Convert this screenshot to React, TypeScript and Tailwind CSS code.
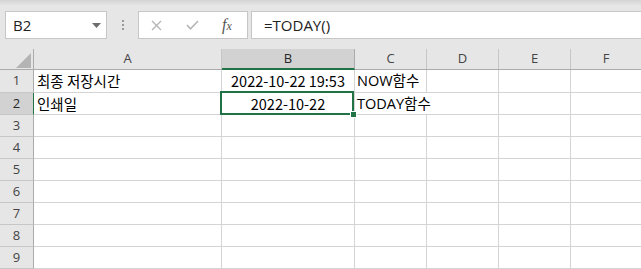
import React from 'react';

const cols = [
  { key: 'A', w: 'w-[188px]' },
  { key: 'B', w: 'w-[133px]' },
  { key: 'C', w: 'w-[72px]' },
  { key: 'D', w: 'w-[72px]' },
  { key: 'E', w: 'w-[72px]' },
  { key: 'F', w: 'flex-1' },
];

const rows = [1, 2, 3, 4, 5, 6, 7, 8, 9];

const cellFont = { fontFamily: '"Noto Sans CJK KR", "Noto Sans", sans-serif' };
const mixedFont = { fontFamily: '"Open Sans", "Noto Sans CJK KR", sans-serif' };

function CellContent({ col, row }: { col: string; row: number }) {
  if (row === 1 && col === 'A') return <span className="pl-[3px]">최종 저장시간</span>;
  if (row === 1 && col === 'B') return <span className="w-full text-center">2022-10-22 19:53</span>;
  if (row === 1 && col === 'C') return <span className="pl-[2px] whitespace-nowrap" style={mixedFont}>NOW함수</span>;
  if (row === 2 && col === 'A') return <span className="pl-[3px]">인쇄일</span>;
  if (row === 2 && col === 'B') return <span className="w-full text-center">2022-10-22</span>;
  if (row === 2 && col === 'C') return <span className="pl-[2px] whitespace-nowrap" style={mixedFont}>TODAY함수</span>;
  return null;
}

export default function App() {
  return (
    <div className="w-[641px] h-[269px] overflow-hidden bg-white select-none" style={{ fontFamily: '"Open Sans", "Noto Sans", sans-serif' }}>
      {/* Formula bar area */}
      <div className="h-[49px] bg-gradient-to-b from-[#d4d4d4] via-[#e6e6e6] via-[12%] to-[#e6e6e6] flex items-start pt-[11px] pl-[5px]">
        {/* Name box */}
        <div className="w-[102px] h-[28px] bg-white border border-[#c6c6c6] flex items-center justify-between pl-[7px] pr-[5px]">
          <span className="text-[15px] text-[#222]">B2</span>
          <svg width="9" height="5" viewBox="0 0 9 5"><path d="M0 0H9L4.5 5Z" fill="#6d6d6d" /></svg>
        </div>
        {/* Separator dots */}
        <div className="w-[31px] h-[28px] flex flex-col items-center justify-center gap-[2px]">
          <div className="w-[2px] h-[2px] bg-[#9a9a9a]" />
          <div className="w-[2px] h-[2px] bg-[#9a9a9a]" />
          <div className="w-[2px] h-[2px] bg-[#9a9a9a]" />
        </div>
        {/* Buttons */}
        <div className="w-[110px] h-[28px] bg-white border border-[#c6c6c6] flex items-center">
          <svg className="ml-[12px]" width="11" height="11" viewBox="0 0 11 11"><path d="M1 1L10 10M10 1L1 10" stroke="#b4b4b4" strokeWidth="1.3" /></svg>
          <svg className="ml-[24px]" width="13" height="10" viewBox="0 0 13 10"><path d="M1 5L4.5 8.8L12 1" stroke="#b4b4b4" strokeWidth="1.5" fill="none" /></svg>
          <span className="ml-[23px] text-[16px] leading-none italic text-[#555]" style={{ fontFamily: '"Liberation Serif", serif' }}>f<span className="text-[12px]">x</span></span>
        </div>
        {/* Formula input */}
        <div className="ml-[3px] flex-1 h-[28px] bg-white border border-[#c6c6c6] border-r-0 flex items-center pl-[12px]">
          <span className="text-[15px] text-[#222]">=TODAY()</span>
        </div>
      </div>

      {/* Column headers */}
      <div className="flex h-[21px] bg-[#e6e6e6] border-b border-[#ababab] text-[13px] text-[#444]">
        <div className="w-[34px] border-r border-[#ababab] relative">
          <svg className="absolute left-[16px] top-[4px]" width="15" height="15" viewBox="0 0 15 15"><path d="M15 0V15H0Z" fill="#b4b4b4" /></svg>
        </div>
        {cols.map((c) =>
          c.key === 'B' ? (
            <div key={c.key} className={`${c.w} bg-[#d2d2d2] border-r border-[#ababab] border-b-2 border-b-[#217346] -mb-[1px] flex items-center justify-center text-[#262626]`}>
              {c.key}
            </div>
          ) : (
            <div key={c.key} className={`${c.w} ${c.key === 'F' ? '' : 'border-r border-[#c6c6c6]'} flex items-center justify-center`}>
              {c.key}
            </div>
          )
        )}
      </div>

      {/* Rows */}
      {rows.map((r) => (
        <div key={r} className={`flex ${r === 1 ? 'h-[23px]' : 'h-[22px]'} border-b border-[#d4d4d4]`}>
          <div
            className={`w-[34px] border-r ${r === 2 ? 'bg-[#d2d2d2] border-[#217346] text-[#262626]' : 'bg-[#e6e6e6] border-[#ababab] text-[#444]'} flex items-center justify-center text-[13px] -mb-[1px] border-b border-b-[#c6c6c6]`}
          >
            {r}
          </div>
          {cols.map((c) => {
            const hideRight = r === 2 && c.key === 'C';
            const selected = r === 2 && c.key === 'B';
            return (
              <div
                key={c.key}
                className={`${c.w} ${c.key === 'F' || hideRight ? '' : 'border-r border-[#d4d4d4]'} ${hideRight ? 'pr-[1px]' : ''} relative flex items-center text-[14.5px] text-black overflow-visible`}
                style={cellFont}
              >
                <CellContent col={c.key} row={r} />
                {selected && (
                  <>
                    <div className="absolute -left-[2px] -top-[2px] right-0 -bottom-[1px] border-2 border-[#217346] pointer-events-none" />
                    <div className="absolute -right-[3px] -bottom-[4px] w-[7px] h-[7px] bg-[#217346] border border-white z-10" />
                  </>
                )}
              </div>
            );
          })}
        </div>
      ))}
    </div>
  );
}
